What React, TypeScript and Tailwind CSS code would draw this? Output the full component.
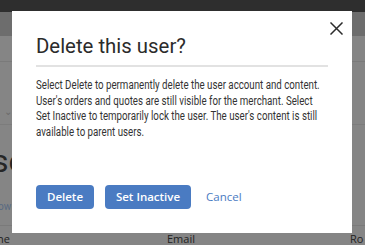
import React from 'react';

const body =
  "Select Delete to permanently delete the user account and content. User's orders and quotes are still visible for the merchant. Select Set Inactive to temporarily lock the user. The user's content is still available to parent users.";

const CloseIcon: React.FC = () => (
  <svg width="13" height="13" viewBox="0 0 13 13" fill="none">
    <path d="M1 1L12 12M12 1L1 12" stroke="#2b2b2b" strokeWidth="1.5" strokeLinecap="square" />
  </svg>
);

export default function App() {
  return (
    <div className="relative w-[365px] h-[245px] overflow-hidden bg-[#858585]" style={{ fontFamily: 'Roboto, sans-serif' }}>
      {/* page behind the overlay */}
      <div className="h-[12px] bg-[#2e2e2e]" />
      <div className="h-[24px] bg-[#6d6d6d]" />
      <div className="h-[26px] border-b border-[#7a7a7a]" />
      <div className="h-[63px] pt-[44px] pl-[4px] text-[#6a6a6a] text-[10px] leading-[12px] border-b border-[#7c7c7c]">⌄</div>
      <div className="h-[65px] pt-[20px] text-[32px] leading-[32px] text-[#262626] -ml-[8px]">se</div>
      <div className="h-[35px] pt-[11px] text-[10px] leading-[12px] text-[#586a82] -ml-[2px]">ow</div>
      <div className="h-[20px] pt-[6px] flex text-[11px] leading-[14px] text-[#222] font-['Open_Sans',sans-serif] border-t border-[#7a7a7a]">
        <span className="w-[170px] -ml-[3px]">ne</span>
        <span className="w-[183px]">Email</span>
        <span>Ro</span>
      </div>

      {/* dialog */}
      <div className="absolute left-[12px] top-[11px] w-[340px] h-[222px] bg-white px-[24px]">
        <button className="absolute right-[9px] top-[11px] p-0">
          <CloseIcon />
        </button>
        <h2 className="mt-[23px] w-[300px] origin-left [transform:scaleX(0.97)] text-[21px] leading-[24px] text-[#2b2b2b]">
          Delete this user?
        </h2>
        <div className="mt-[7px] h-[2px] bg-[#e2e2e2]" />
        <p className="mt-[11px] w-[360px] origin-left [transform:scaleX(0.81)] text-[12px] leading-[15.7px] text-[#333]">{body}</p>
        <div className="mt-[44px] flex items-center gap-[11px] font-['Open_Sans',sans-serif]">
          <button className="h-[24px] w-[58px] rounded-[4px] bg-[#4a7bc2] text-white text-[11.5px] font-semibold">
            Delete
          </button>
          <button className="h-[24px] w-[86px] rounded-[4px] bg-[#4a7bc2] text-white text-[11.5px] font-semibold">
            Set Inactive
          </button>
          <button className="ml-[4px] text-[11.5px] text-[#4a7bc2]">Cancel</button>
        </div>
      </div>
    </div>
  );
}
